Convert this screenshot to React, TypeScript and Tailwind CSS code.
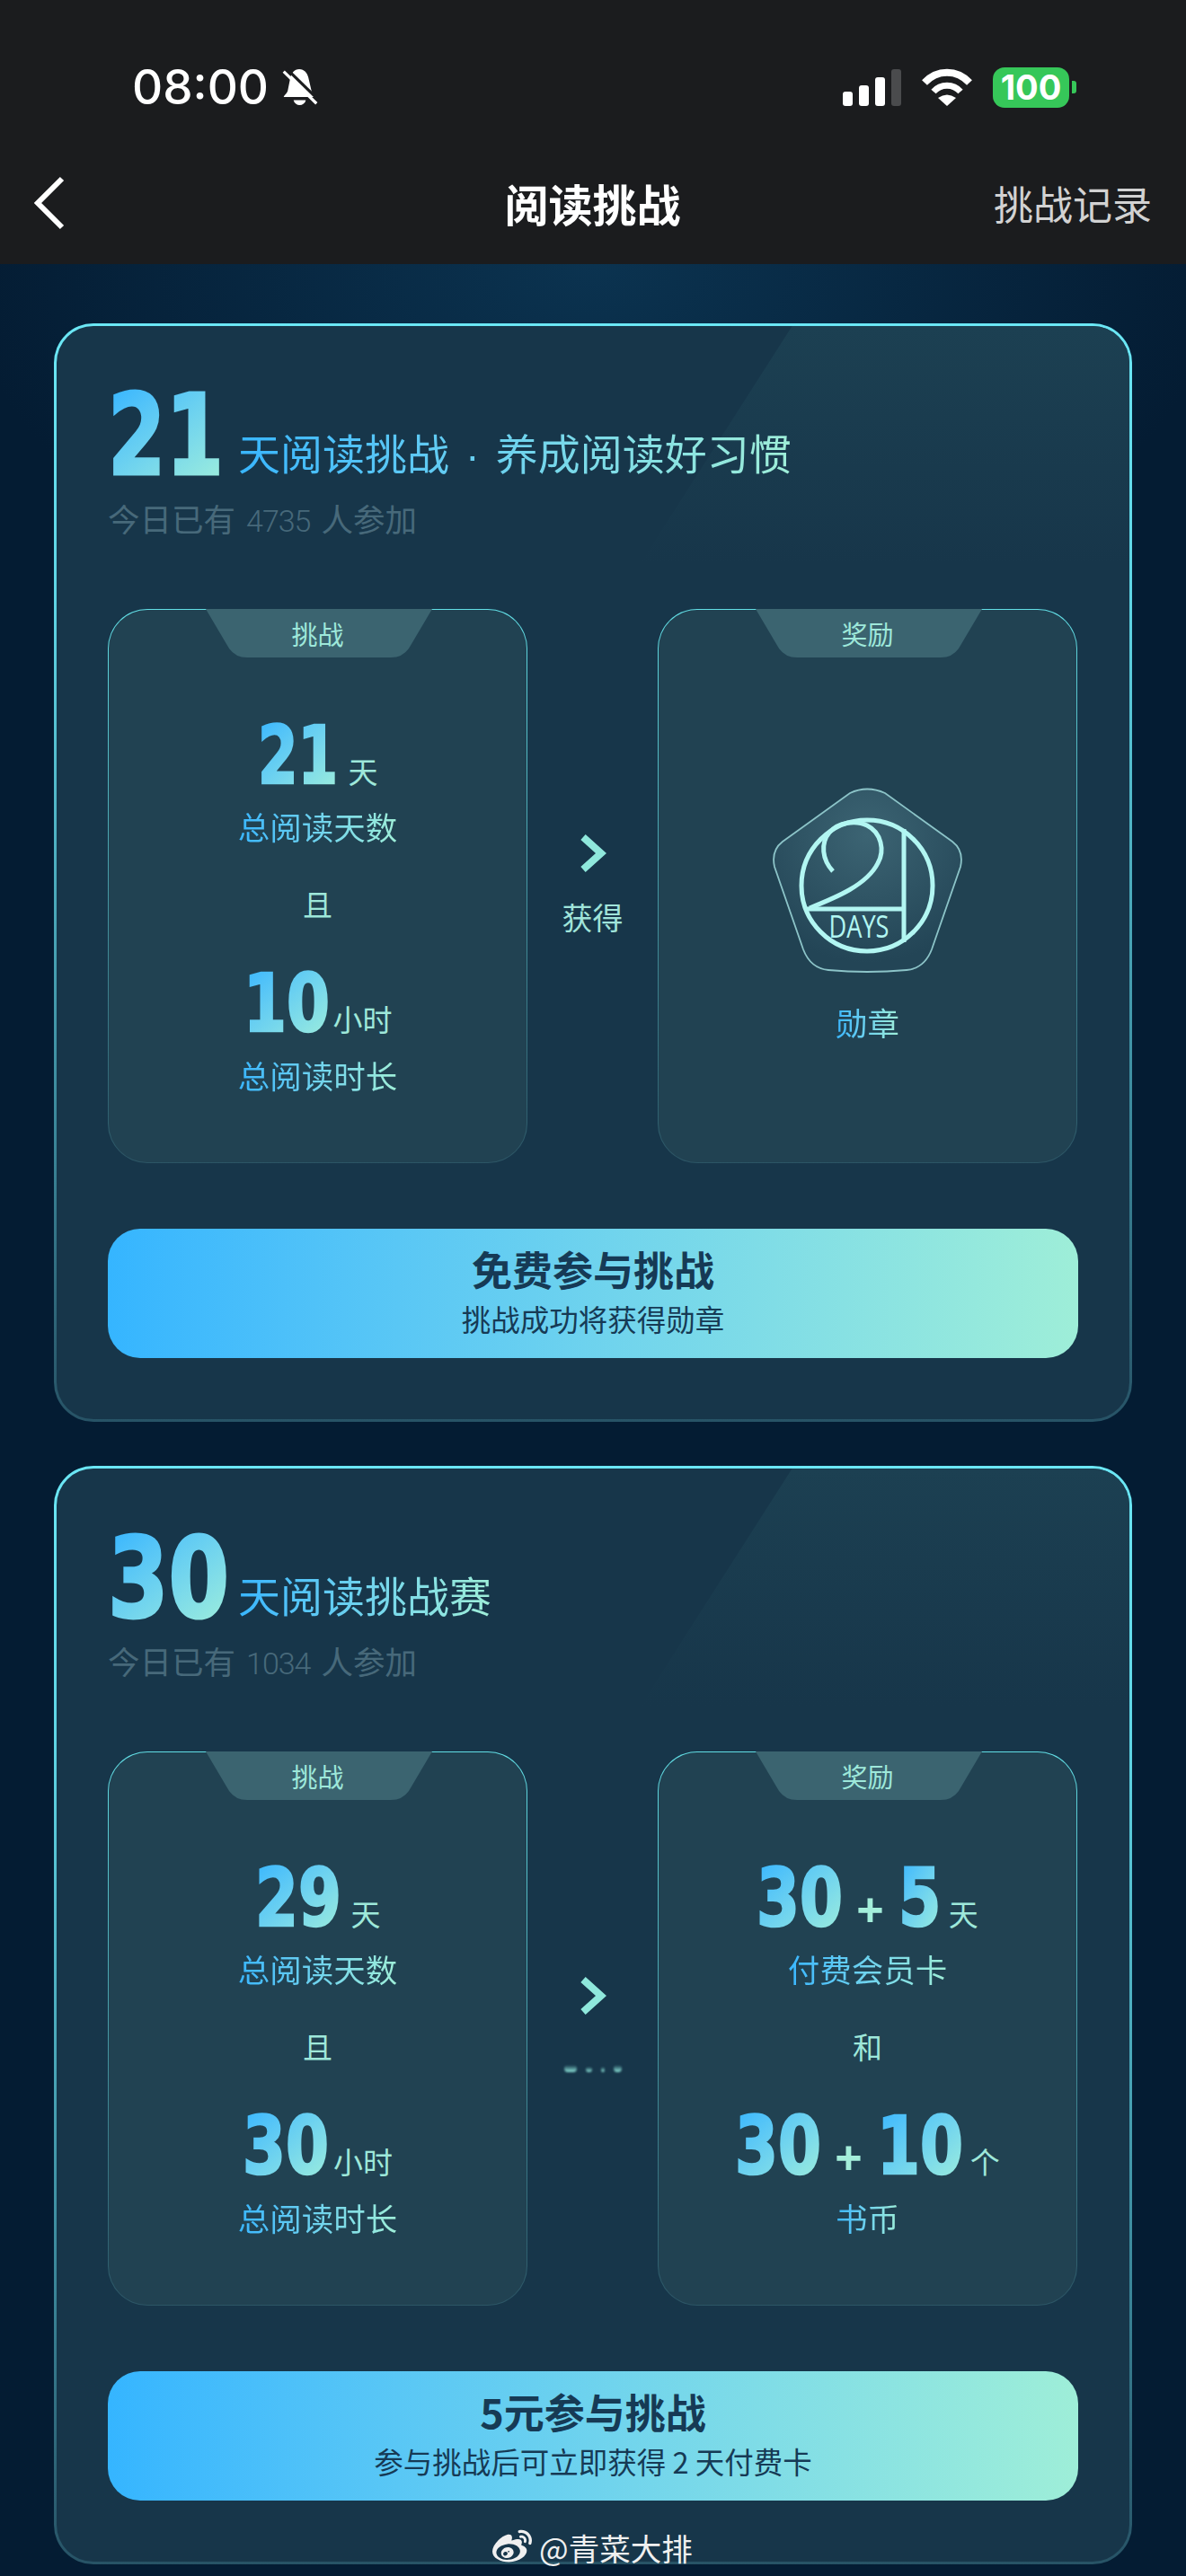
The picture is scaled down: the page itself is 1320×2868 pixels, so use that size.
import React from 'react';
import { FaWeibo } from 'react-icons/fa';

const DIGIT_FONT = "font-['DejaVu_Sans',sans-serif] font-stretch-condensed font-bold whitespace-nowrap origin-left";

// the condensed digits are squeezed further, so each width and squeeze is set by hand
const numBoxes: Record<string, string> = {
  '5': 'w-[46px]',
  '10': 'w-[94px]',
  '21': 'w-[89px]',
  '29': 'w-[95px]',
  '30': 'w-[95px]',
};
const numSqueeze: Record<string, string> = {
  '5': 'scale-x-[0.85]',
  '10': 'scale-x-[0.86]',
  '21': 'scale-x-[0.8]',
  '29': 'scale-x-[0.86]',
  '30': 'scale-x-[0.86]',
};

const Num: React.FC<{ children: string }> = ({ children }) => (
  <span className={`block ${numBoxes[children]}`}>
    <span className={`${DIGIT_FONT} ${numSqueeze[children]} inline-block text-[89px] leading-[84px] [-webkit-text-stroke:2.500px_transparent] bg-linear-to-br from-[#35b5ff] to-[#9eeedb] bg-clip-text text-transparent`}>
      {children}
    </span>
  </span>
);

const Unit: React.FC<{ children: React.ReactNode }> = ({ children }) => (
  <span className="text-[33px] leading-[40px] text-[#9ee8da]">{children}</span>
);

const Label: React.FC<{ children: React.ReactNode }> = ({ children }) => (
  <div className="h-[44px] text-[35.500px] leading-[44px] bg-linear-to-r from-[#38b6ff] to-[#9eeed8] bg-clip-text text-transparent">
    {children}
  </div>
);

const Joiner: React.FC<{ children: React.ReactNode }> = ({ children }) => (
  <div className="h-[44px] mt-[42px] mb-[47px] text-[33px] leading-[44px] text-[#9ee8da]">{children}</div>
);

const Plus = () => (
  <span className="font-['Liberation_Sans',sans-serif] font-bold text-[52px] leading-[84px] text-[#a4eeda] mx-[16px]">+</span>
);

const Panel: React.FC<{ tab: string; children: React.ReactNode }> = ({ tab, children }) => (
  <div className="relative w-[467px] h-[617px] rounded-[44px] border border-transparent [background:linear-gradient(#214252,#214252)_padding-box,linear-gradient(180deg,#62dfe6,#2c5565)_border-box] flex flex-col items-center">
    <svg className="absolute left-[108px] -top-px" width="252" height="55" viewBox="0 0 252 55">
      <path d="M0 0H252L226 44Q219 54 206 54H46Q33 54 26 44Z" fill="#3b6470" />
    </svg>
    <div className="relative h-[54px] text-[29px] leading-[52px] text-[#9ee8da]">{tab}</div>
    {children}
  </div>
);

const Row: React.FC<{ children: React.ReactNode }> = ({ children }) => (
  <div className="flex items-baseline h-[84px]">{children}</div>
);

const Gain: React.FC<{ blurred?: boolean }> = ({ blurred }) => (
  <div className="w-[145px] flex flex-col items-center pt-[250px]">
    <svg width="32" height="44" viewBox="0 0 32 44">
      <path d="M5 4L25 22L5 40" fill="none" stroke="#8fe8dc" strokeWidth="8" />
    </svg>
    {blurred ? (
      <div className="h-[44px] mt-[27px] flex items-end justify-center gap-[10px] pb-[8px] blur-[1px]">
        <span className="w-[14px] h-[8px] rounded-sm bg-linear-to-b from-transparent to-[#8fe8dc]" />
        <span className="w-[7px] h-[6px] rounded-sm bg-linear-to-b from-transparent to-[#8fe8dc]" />
        <span className="w-[4px] h-[6px] rounded-sm bg-linear-to-b from-transparent to-[#8fe8dc]" />
        <span className="w-[9px] h-[8px] rounded-sm bg-linear-to-b from-transparent to-[#8fe8dc]" />
      </div>
    ) : (
      <div className="h-[44px] mt-[27px] text-[34px] leading-[44px] text-[#a0e4da]">获得</div>
    )}
  </div>
);

const Badge = () => (
  <svg className="mt-[141px]" width="215" height="212" viewBox="-3 -3 215 212">
    <defs>
      <radialGradient id="badgeFill" cx="50%" cy="25%" r="70%">
        <stop offset="0" stopColor="#3c6473" />
        <stop offset="1" stopColor="#234556" />
      </radialGradient>
    </defs>
    <path
      d="M85 6Q104 -3 124 6L199 60Q212 70 208 88L176 180Q168 201 148 203Q104 207 61 203Q41 201 33 180L1 88Q-3 70 10 60Z"
      fill="url(#badgeFill)"
      stroke="#8cc4c8"
      strokeWidth="1.8"
    />
    <g fill="none" stroke="#b2f6f2" strokeWidth="5">
      <circle cx="104" cy="109" r="73" />
      <path d="M66 93C54 80 52 62 62 50C72 38 92 36 104 42C120 50 124 70 116 84C104 108 70 122 40 134" />
      <path d="M36 135H145M145 46V172" />
    </g>
    <text x="95" y="167" textAnchor="middle" textLength="67" lengthAdjust="spacingAndGlyphs" fontFamily="Open Sans, sans-serif" fontSize="34" fill="#b2f6f2">
      DAYS
    </text>
  </svg>
);

const Card: React.FC<{
  days: string;
  title: React.ReactNode;
  count: string;
  left: React.ReactNode;
  right: React.ReactNode;
  blurred?: boolean;
  cta: string;
  ctaSub: string;
}> = ({ days, title, count, left, right, blurred, cta, ctaSub }) => (
  <div className="relative h-[1223px] rounded-[44px] border-[3px] border-transparent overflow-hidden [background:linear-gradient(#17364a,#17364a)_padding-box,linear-gradient(180deg,#6be7f5_0%,#5fd5e5_25%,#3a8598_75%,#275366_100%)_border-box] px-[57px] pt-[60px]">
    <div className="absolute top-0 right-0 w-[544px] h-[264px] bg-linear-to-b from-[#1c4052] to-[#17364a] [clip-path:polygon(31%_0,100%_0,100%_100%,0_100%)]" />
    <div className="relative flex items-start h-[104px]">
      <span className="block w-[145px] mt-[10px]">
        <span className={`${DIGIT_FONT} ${days === '21' ? 'scale-x-[0.83]' : 'scale-x-[0.87]'} inline-block text-[124px] leading-[104px] [-webkit-text-stroke:3px_transparent] bg-linear-to-br from-[#35b5ff] to-[#9eeedb] bg-clip-text text-transparent`}>
          {days}
        </span>
      </span>
      <span className="mt-[50px] text-[47px] leading-[60px] bg-linear-to-r from-[#38b6ff] to-[#9eeed8] bg-clip-text text-transparent">
        {title}
      </span>
    </div>
    <div className="relative mt-[25px] h-[50px] text-[35.500px] leading-[50px] text-[#47697a]">
      今日已有
      <span className="mx-[12px] font-['Roboto',sans-serif] font-light text-[34px] leading-[34px] tracking-[-1px]">{count}</span>
      人参加
    </div>
    <div className="relative mt-[76px] flex">
      <Panel tab="挑战">{left}</Panel>
      <Gain blurred={blurred} />
      <Panel tab="奖励">{right}</Panel>
    </div>
    <div className="relative mt-[73px] h-[144px] rounded-[36px] bg-linear-to-r from-[#35b5ff] to-[#9eeed8] flex flex-col items-center text-[#163a55]">
      <div className="mt-[16px] h-[58px] text-[45px] leading-[58px] font-bold">{cta}</div>
      <div className="mt-[3px] h-[46px] text-[32.500px] leading-[46px]">{ctaSub}</div>
    </div>
  </div>
);

const Goal: React.FC<{ days: string; hours: string }> = ({ days, hours }) => (
  <>
    <div className="h-[66px]" />
    <Row>
      <Num>{days}</Num>
      <span className="ml-[12px]"><Unit>天</Unit></span>
    </Row>
    <div className="mt-[15px]"><Label>总阅读天数</Label></div>
    <Joiner>且</Joiner>
    <Row>
      <Num>{hours}</Num>
      <span className="ml-[6px]"><Unit>小时</Unit></span>
    </Row>
    <div className="mt-[16px]"><Label>总阅读时长</Label></div>
  </>
);

const App: React.FC = () => (
  <div className="w-[1320px] h-[2868px] overflow-hidden font-['Noto_Sans_CJK_SC',sans-serif] bg-[#041c33] bg-[radial-gradient(ellipse_700px_420px_at_660px_294px,#0b3350,#041c33)]">
    <header className="h-[294px] bg-[#1b1c1e] text-white">
      <div className="h-[178px] pl-[147px] pr-[122px] flex items-center justify-between pt-[16px]">
        <div className="flex items-center gap-[14px]">
          <span className="font-['Inter',sans-serif] font-medium text-[53px] leading-[60px]">08:00</span>
          <svg width="42" height="48" viewBox="0 0 46 50">
            <path d="M22 3C28 3 32 8 33 13L37 30C38 33 40 34 41 37H3C4 34 7 33 8 29L11 14C12 8 16 3 22 3Z" fill="#fff" />
            <path d="M15 41H30C29 45 26 47 22.500 47C19 47 16 45 15 41Z" fill="#fff" />
            <path d="M7 3L47 42" stroke="#1b1c1e" strokeWidth="3.500" />
            <path d="M3 6L43 45" stroke="#fff" strokeWidth="3.500" />
          </svg>
        </div>
        <div className="flex items-center">
          <div className="flex items-end gap-[7px] h-[42px]">
            <span className="w-[11px] h-[16px] rounded-[3px] bg-white" />
            <span className="w-[11px] h-[23px] rounded-[3px] bg-white" />
            <span className="w-[11px] h-[32px] rounded-[3px] bg-white" />
            <span className="w-[11px] h-[41px] rounded-[3px] bg-[#4a4b4d]" />
          </div>
          <svg className="ml-[22px]" width="58" height="42" viewBox="0 0 58 42">
            <g fill="none" stroke="#fff">
              <path d="M4 16C18 1 40 1 54 16" strokeWidth="8" />
              <path d="M14 26C22 17 36 17 44 26" strokeWidth="7" />
            </g>
            <path d="M19 33Q29 26 39 33L29 42Z" fill="#fff" />
          </svg>
          <div className="ml-[22px] w-[85px] h-[45px] rounded-[13px] bg-[#36c759] font-['Inter',sans-serif] font-bold text-[38px] leading-[45px] text-center">100</div>
          <span className="ml-[3px] w-[5px] h-[14px] rounded-r-[3px] bg-[#36c759]" />
        </div>
      </div>
      <div className="h-[96px] pl-[37px] pr-[38px] grid grid-cols-[1fr_auto_1fr] items-center">
        <svg width="36" height="60" viewBox="0 0 36 60">
          <path d="M32 3L5 30L32 57" fill="none" stroke="#fff" strokeWidth="6" />
        </svg>
        <div className="text-[49px] leading-[60px] font-bold">阅读挑战</div>
        <div className="text-right text-[44px] leading-[60px] text-[#d2d2d2]">挑战记录</div>
      </div>
    </header>

    <main className="relative px-[60px] pt-[66px] flex flex-col gap-[49px]">
      <Card
        days="21"
        title={
          <>
            天阅读挑战
            <span className="mx-[18px] font-['Liberation_Sans',sans-serif]">·</span>
            养成阅读好习惯
          </>
        }
        count="4735"
        left={<Goal days="21" hours="10" />}
        right={
          <>
            <Badge />
            <div className="mt-[30px] h-[44px] text-[35.500px] leading-[44px] bg-linear-to-r from-[#38b6ff] to-[#9eeed8] bg-clip-text text-transparent">勋章</div>
          </>
        }
        cta="免费参与挑战"
        ctaSub="挑战成功将获得勋章"
      />
      <Card
        days="30"
        title="天阅读挑战赛"
        count="1034"
        blurred
        left={<Goal days="29" hours="30" />}
        right={
          <>
            <div className="h-[66px]" />
            <Row>
              <Num>30</Num>
              <Plus />
              <Num>5</Num>
              <span className="ml-[10px]"><Unit>天</Unit></span>
            </Row>
            <div className="mt-[15px]"><Label>付费会员卡</Label></div>
            <Joiner>和</Joiner>
            <Row>
              <Num>30</Num>
              <Plus />
              <Num>10</Num>
              <span className="ml-[10px]"><Unit>个</Unit></span>
            </Row>
            <div className="mt-[16px]"><Label>书币</Label></div>
          </>
        }
        cta="5元参与挑战"
        ctaSub="参与挑战后可立即获得 2 天付费卡"
      />
      <div className="absolute left-[548px] top-[2520px] flex items-center text-[#f0f0f0]">
        <FaWeibo className="w-[44px] h-[44px]" />
        <span className="ml-[8px] text-[34.500px] leading-[44px]">@青菜大排</span>
      </div>
    </main>
  </div>
);

export default App;
